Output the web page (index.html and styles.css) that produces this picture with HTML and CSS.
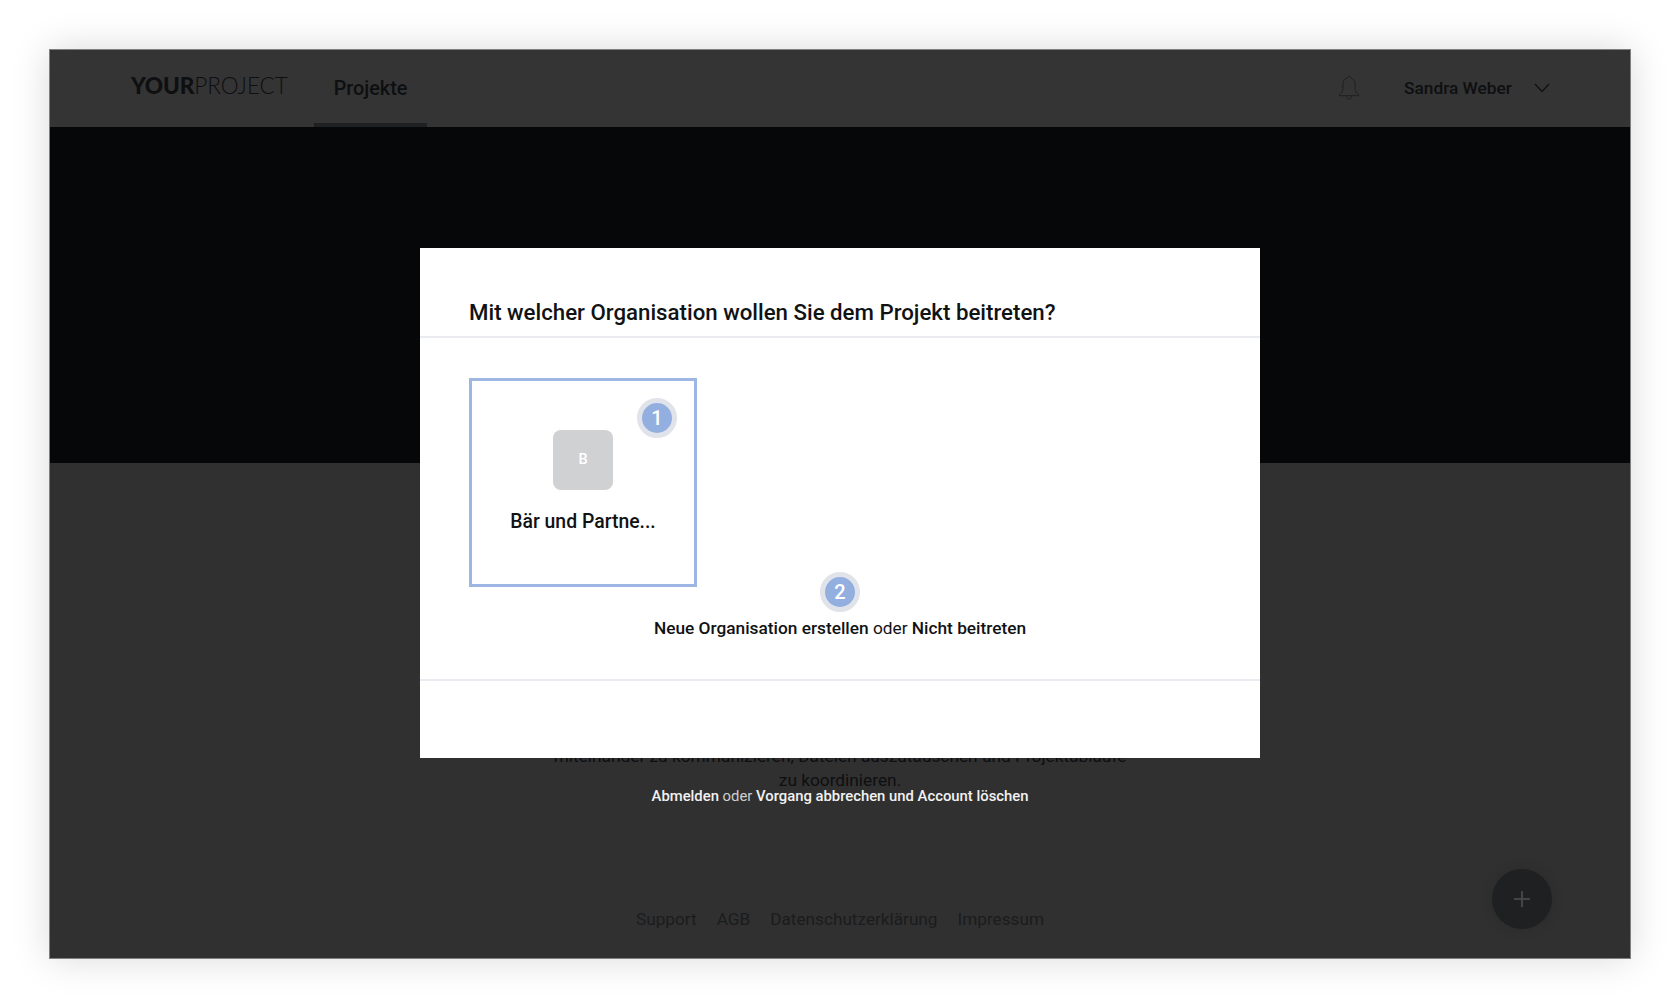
FILE: index.html
```html
<!DOCTYPE html>
<html lang="de">
<head>
<meta charset="utf-8">
<title>YourProject</title>
<link rel="stylesheet" href="styles.css">
</head>
<body>
<div class="frame">
  <header class="topbar">
    <div class="logo"><b>YOUR</b>PROJECT</div>
    <nav class="nav"><a class="nav-item">Projekte</a></nav>
    <div class="user">
      <svg class="bell" viewBox="0 0 22 26" fill="none" stroke="#1e1f21" stroke-width="1"><path d="M11 1.2c-.9 0-1.5.7-1.5 1.6-3 .8-4.6 3.2-4.6 6.2v4.5c0 2.700-1.500 4.500-3.600 6v1.200h19.400v-1.200c-2.100-1.500-3.600-3.300-3.600-6V9c0-3-1.600-5.400-4.600-6.200 0-.9-.6-1.600-1.500-1.600z"/><path d="M8.600 21.300c0 1.800 1 2.900 2.400 2.900s2.400-1.100 2.400-2.900"/></svg>
      <span class="user-name">Sandra Weber</span>
      <svg class="chevron" viewBox="0 0 16 10" fill="none" stroke="#111214" stroke-width="1.300"><path d="M1 1l7 7.500L15 1"/></svg>
    </div>
  </header>
  <section class="hero"></section>
  <main class="content">
    <p class="intro">miteinander zu kommunizieren, Dateien auszutauschen und Projektabläufe<br>zu koordinieren.</p>
    <p class="logout"><b>Abmelden</b> oder <b>Vorgang abbrechen und Account löschen</b></p>
    <footer class="footer">
      <a>Support</a><a>AGB</a><a>Datenschutzerklärung</a><a>Impressum</a>
    </footer>
  </main>
  <button class="fab"><svg viewBox="0 0 16 16" stroke="#444546" stroke-width="2"><path d="M8 0v16M0 8h16"/></svg></button>
  <div class="modal">
    <h2 class="modal-title">Mit welcher Organisation wollen Sie dem Projekt beitreten?</h2>
    <div class="modal-body">
      <div class="org-card">
        <div class="avatar">B</div>
        <div class="org-name">Bär und Partne...</div>
        <span class="step step-one">1</span>
      </div>
      <div class="choice">
        <span class="step">2</span>
        <p class="choice-text"><b>Neue Organisation erstellen</b> oder <b>Nicht beitreten</b></p>
      </div>
    </div>
    <div class="modal-foot"></div>
  </div>
</div>
</body>
</html>
```
FILE: styles.css
```css
* { box-sizing: border-box; }
html, body { margin: 0; height: 100%; }
body {
  background: #fff;
  padding: 49px;
  font-family: Roboto, "Liberation Sans", sans-serif;
  overflow: hidden;
}
.frame {
  position: relative;
  width: 1582px;
  height: 910px;
  display: flex;
  flex-direction: column;
  background: #303030;
  box-shadow: 0 0 36px rgba(0, 0, 0, .15);
  outline: 1px solid #808080;
  outline-offset: -1px;
}
.topbar {
  height: 78px;
  flex: none;
  display: flex;
  align-items: stretch;
  background: #343434;
  padding: 0 81px 0 82px;
  color: #0e0f11;
}
.logo {
  font-family: Lato, sans-serif;
  font-size: 22.600px;
  font-weight: 300;
  line-height: 74px;
  letter-spacing: -.1px;
  width: 183px;
}
.logo b { font-weight: 900; }
.nav { display: flex; }
.nav-item {
  width: 113px;
  text-align: center;
  font-size: 19.800px;
  font-weight: 500;
  line-height: 80px;
  height: 78px;
  border-bottom: 4px solid #1f2022;
}
.user { margin-left: auto; display: flex; align-items: center; }
.bell { width: 22px; height: 26px; margin-right: 44px; }
.user-name { font-size: 17.300px; font-weight: 500; width: 130px; line-height: 22px; }
.chevron { width: 16px; height: 10px; }
.hero { height: 336px; flex: none; background: #060709; }
.content {
  flex: 1;
  display: flex;
  flex-direction: column;
  align-items: center;
  padding-top: 281px;
}
.intro {
  margin: 0;
  font-size: 17.300px;
  line-height: 24px;
  text-align: center;
  color: #0e0f11;
}
.logout {
  margin: -4px 0 0;
  font-size: 14.840px;
  line-height: 17px;
  color: #cfcfcf;
}
.logout b { font-weight: 500; color: #f2f2f2; }
.footer {
  margin-top: auto;
  padding-bottom: 28px;
  display: flex;
  gap: 20px;
  font-size: 17.200px;
  line-height: 24px;
  color: #1b1c1d;
}
.fab {
  position: absolute;
  left: 1443px;
  top: 820px;
  width: 60px;
  height: 60px;
  padding: 0;
  border: 0;
  border-radius: 50%;
  background: #1f2021;
  box-shadow: 0 0 14px rgba(0, 0, 0, .12);
  display: flex;
  align-items: center;
  justify-content: center;
}
.fab svg { width: 16px; height: 16px; }
.modal {
  position: absolute;
  left: 371px;
  top: 199px;
  width: 840px;
  height: 510px;
  background: #fff;
  display: flex;
  flex-direction: column;
  color: #111214;
}
.modal-title {
  margin: 0;
  height: 90px;
  flex: none;
  padding: 50px 49px 0;
  font-size: 22.250px;
  font-weight: 500;
  line-height: 28px;
  border-bottom: 2px solid #e9ebf1;
}
.modal-body { flex: 1; padding: 40px 49px 0; display: flex; flex-direction: column; }
.org-card {
  position: relative;
  width: 228px;
  height: 209px;
  border: 3px solid #9db6e3;
  display: flex;
  flex-direction: column;
  align-items: center;
  padding-top: 49px;
}
.avatar {
  width: 60px;
  height: 60px;
  border-radius: 8px;
  background: #d0d1d3;
  color: #fff;
  font-size: 14.500px;
  font-weight: 500;
  padding-bottom: 2px;
  display: flex;
  align-items: center;
  justify-content: center;
}
.org-name { margin-top: 20px; font-size: 19.400px; font-weight: 500; line-height: 24px; }
.step {
  width: 40px;
  height: 40px;
  border-radius: 50%;
  background: #93afe0;
  border: 5px solid #e0e3ea;
  color: #fff;
  font-size: 20px;
  font-weight: 500;
  line-height: 30px;
  text-align: center;
  flex: none;
}
.step-one { position: absolute; left: 165px; top: 17px; }
.choice { margin-top: -15px; display: flex; flex-direction: column; align-items: center; }
.choice-text { margin: 5px 0 0; font-size: 17.300px; line-height: 22px; font-weight: 400; }
.choice-text b { font-weight: 500; }
.modal-foot { height: 79px; flex: none; border-top: 2px solid #e9ebf1; }
```
